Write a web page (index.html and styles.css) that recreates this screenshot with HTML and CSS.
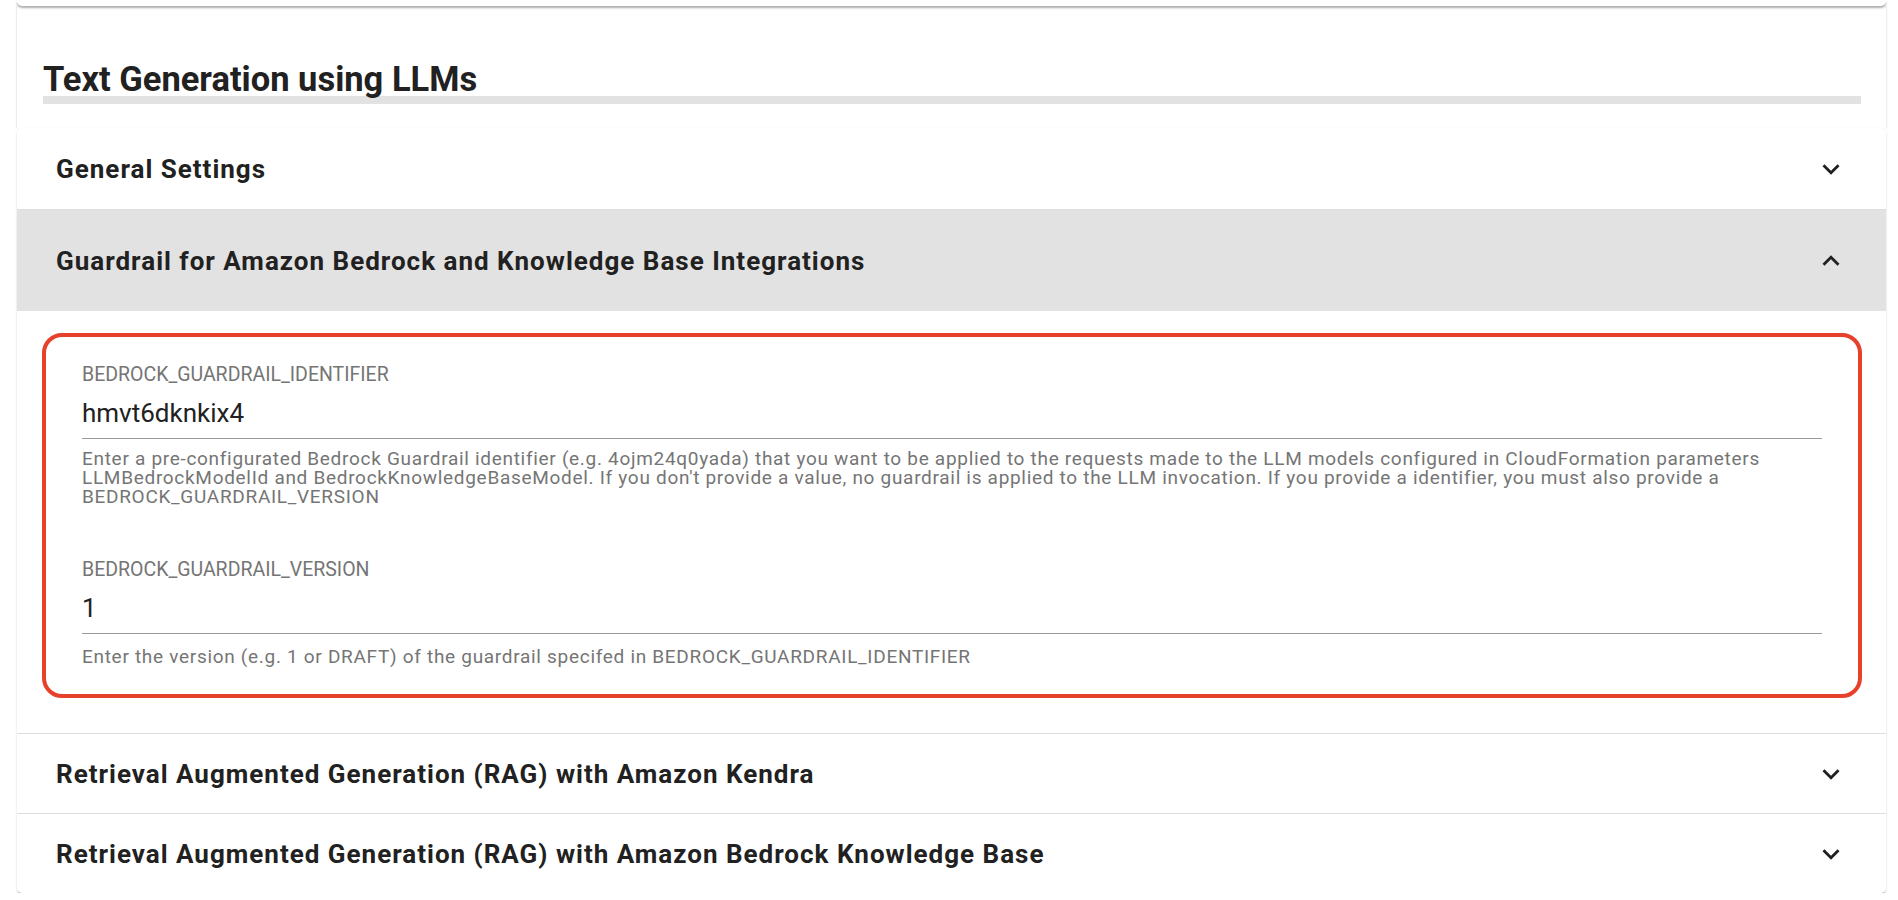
FILE: index.html
```html
<!DOCTYPE html>
<html lang="en">
<head>
<meta charset="utf-8">
<title>Text Generation using LLMs</title>
<link rel="stylesheet" href="styles.css">
</head>
<body>
<div class="page">
  <div class="top-card"></div>
  <section class="panel">
    <h2 class="section-title">Text Generation using LLMs</h2>
  </section>
  <div class="accordion">
    <div class="acc-item">
      <div class="acc-summary">
        <span class="acc-title">General Settings</span>
        <svg class="chev" viewBox="0 0 24 24"><path d="M16.59 8.59 12 13.17 7.41 8.59 6 10l6 6 6-6z"/></svg>
      </div>
    </div>
    <div class="acc-item expanded">
      <div class="acc-summary">
        <span class="acc-title">Guardrail for Amazon Bedrock and Knowledge Base Integrations</span>
        <svg class="chev" viewBox="0 0 24 24"><path d="m12 8-6 6 1.41 1.41L12 10.83l4.59 4.58L18 14z"/></svg>
      </div>
      <div class="acc-details">
        <div class="highlight">
          <div class="field">
            <div class="field-label">BEDROCK_GUARDRAIL_IDENTIFIER</div>
            <div class="field-input">hmvt6dknkix4</div>
            <p class="field-help">Enter a pre-configurated Bedrock Guardrail identifier (e.g. 4ojm24q0yada) that you want to be applied to the requests made to the LLM models configured in CloudFormation parameters LLMBedrockModelId and BedrockKnowledgeBaseModel. If you don't provide a value, no guardrail is applied to the LLM invocation. If you provide a identifier, you must also provide a BEDROCK_GUARDRAIL_VERSION</p>
          </div>
          <div class="field">
            <div class="field-label">BEDROCK_GUARDRAIL_VERSION</div>
            <div class="field-input">1</div>
            <p class="field-help">Enter the version (e.g. 1 or DRAFT) of the guardrail specifed in BEDROCK_GUARDRAIL_IDENTIFIER</p>
          </div>
        </div>
      </div>
    </div>
    <div class="acc-item">
      <div class="acc-summary">
        <span class="acc-title">Retrieval Augmented Generation (RAG) with Amazon Kendra</span>
        <svg class="chev" viewBox="0 0 24 24"><path d="M16.59 8.59 12 13.17 7.41 8.59 6 10l6 6 6-6z"/></svg>
      </div>
    </div>
    <div class="acc-item">
      <div class="acc-summary">
        <span class="acc-title">Retrieval Augmented Generation (RAG) with Amazon Bedrock Knowledge Base</span>
        <svg class="chev" viewBox="0 0 24 24"><path d="M16.59 8.59 12 13.17 7.41 8.59 6 10l6 6 6-6z"/></svg>
      </div>
    </div>
  </div>
</div>
</body>
</html>
```

FILE: styles.css
```css
html, body {
  margin: 0;
  padding: 0;
  background: #ffffff;
  font-family: Roboto, "Liberation Sans", Arial, sans-serif;
  color: #212121;
}

.page {
  margin-left: 17px;
  width: 1869px;
  display: flex;
  flex-direction: column;
}

.top-card {
  height: 6px;
  background: #fff;
  border-radius: 0 0 5px 5px;
  box-shadow: 0 2px 2px rgba(0, 0, 0, 0.28), 0 1px 4px rgba(0, 0, 0, 0.08);
  position: relative;
  z-index: 2;
}

.panel {
  background: #fff;
  padding: 56px 25px 24px 26px;
  box-shadow: -1px 0 1px rgba(0, 0, 0, 0.07), 1px 0 1px rgba(0, 0, 0, 0.07);
}

.section-title {
  margin: 0;
  font-size: 34.5px;
  line-height: 34px;
  font-weight: 700;
  color: #212121;
  border-bottom: 8px solid #e2e2e2;
}

.accordion {
  background: #fff;
  border-radius: 5px;
  box-shadow: 0 2px 2px -1px rgba(0, 0, 0, 0.3), 0 1px 3px rgba(0, 0, 0, 0.1);
  overflow: hidden;
  position: relative;
  z-index: 1;
}

.acc-item + .acc-item {
  border-top: 1px solid #dedede;
}

.acc-summary {
  display: flex;
  align-items: center;
  justify-content: space-between;
  height: 79px;
  padding: 0 38px 0 39px;
}

.acc-item:first-child .acc-summary {
  height: 81px;
}

.expanded .acc-summary {
  height: 101px;
  background: #e2e2e2;
}

.acc-title {
  font-size: 26px;
  letter-spacing: 1px;
  font-weight: 700;
  color: #212121;
}

.chev {
  width: 34px;
  height: 34px;
  fill: #212121;
}

.acc-details {
  padding: 22px 24px 35px 25px;
}

.highlight {
  border: 4px solid #e8412b;
  border-radius: 20px;
  padding: 27px 36px 27px 36px;
}

.field + .field {
  margin-top: 53px;
}

.field-label {
  font-size: 19.5px;
  line-height: 22px;
  color: #757575;
}

.field-input {
  font-size: 26px;
  line-height: 30px;
  color: #212121;
  padding: 12px 0 10px;
  border-bottom: 1px solid #9a9a9a;
}

.field-help {
  margin: 11px 0 0;
  font-size: 19px;
  letter-spacing: 0.7px;
  line-height: 18.8px;
  color: #757575;
}

.field + .field .field-help {
  margin-top: 14px;
}
```
